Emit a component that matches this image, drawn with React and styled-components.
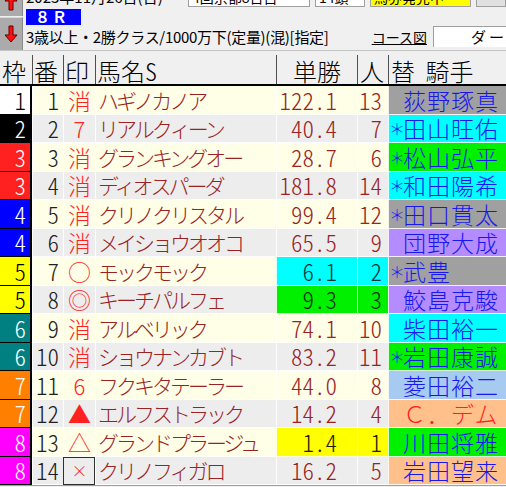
import React from "react";
import styled, { createGlobalStyle } from "styled-components";

const GlobalStyle = createGlobalStyle`
  *, *::before, *::after { box-sizing: border-box; }
  html, body { margin: 0; padding: 0; background: #f0f0f0; overflow: hidden; }
  body { font-family: "Noto Sans CJK JP", "Noto Sans", sans-serif; color: #000; }
`;

const WAKU = {
  1: { bg: "#ffffff", fg: "#000000" },
  2: { bg: "#000000", fg: "#ffffff" },
  3: { bg: "#ff2020", fg: "#ffffff" },
  4: { bg: "#0000ff", fg: "#ffffff" },
  5: { bg: "#ffff00", fg: "#000000" },
  6: { bg: "#008080", fg: "#ffffff" },
  7: { bg: "#ff8000", fg: "#ffffff" },
  8: { bg: "#ff00ff", fg: "#ffffff" },
};

const horses = [
  { waku: 1, num: 1, mark: "消", name: "ハギノカノア", odds: "122.1", pop: 13, star: false, jockey: "荻野琢真", jbg: "#a0a0a0" },
  { waku: 2, num: 2, mark: "7", name: "リアルクィーン", odds: "40.4", pop: 7, star: true, jockey: "田山旺佑", jbg: "#00ffff" },
  { waku: 3, num: 3, mark: "消", name: "グランキングオー", odds: "28.7", pop: 6, star: true, jockey: "松山弘平", jbg: "#00f000" },
  { waku: 3, num: 4, mark: "消", name: "ディオスパーダ", odds: "181.8", pop: 14, star: true, jockey: "和田陽希", jbg: "#00ffff" },
  { waku: 4, num: 5, mark: "消", name: "クリノクリスタル", odds: "99.4", pop: 12, star: true, jockey: "田口貫太", jbg: "#a0a0a0" },
  { waku: 4, num: 6, mark: "消", name: "メイショウオオコ", odds: "65.5", pop: 9, star: false, jockey: "団野大成", jbg: "#b48cff" },
  { waku: 5, num: 7, mark: "○", name: "モックモック", odds: "6.1", pop: 2, star: true, jockey: "武豊", jbg: "#a0a0a0", hot: "#00ffff", hotFg: "#003838" },
  { waku: 5, num: 8, mark: "◎", name: "キーチパルフェ", odds: "9.3", pop: 3, star: false, jockey: "鮫島克駿", jbg: "#b48cff", hot: "#00f000", hotFg: "#003000" },
  { waku: 6, num: 9, mark: "消", name: "アルベリック", odds: "74.1", pop: 10, star: false, jockey: "柴田裕一", jbg: "#00ffff" },
  { waku: 6, num: 10, mark: "消", name: "ショウナンカブト", odds: "83.2", pop: 11, star: true, jockey: "岩田康誠", jbg: "#00f000" },
  { waku: 7, num: 11, mark: "6", name: "フクキタテーラー", odds: "44.0", pop: 8, star: false, jockey: "菱田裕二", jbg: "#a6caf0" },
  { waku: 7, num: 12, mark: "▲", name: "エルフストラック", odds: "14.2", pop: 4, star: false, jockey: "Ｃ．デム", jbg: "#ffc08c", jfg: "#ff2020" },
  { waku: 8, num: 13, mark: "△", name: "グランドプラージュ", odds: "1.4", pop: 1, star: false, jockey: "川田将雅", jbg: "#00f000", hot: "#ffff00", hotFg: "#202000" },
  { waku: 8, num: 14, mark: "×", name: "クリノフィガロ", odds: "16.2", pop: 5, star: false, jockey: "岩田望来", jbg: "#ffc08c", focus: true },
];

const COLS = "32px 31px 32px 181px 81px 31px 118px";

const Window = styled.div`
  width: 506px;
  height: 487px;
  overflow: hidden;
  background: #f0f0f0;
`;

const TopPanel = styled.div`
  display: flex;
  margin-top: -16px;
  height: 67px;
  border-bottom: 1px solid #c4c4c4;
`;

const ArrowCol = styled.div`
  width: 30px;
  display: flex;
  flex-direction: column;
  gap: 1px;
`;

const ArrowButton = styled.div`
  height: ${(p) => p.$h}px;
  display: flex;
  align-items: ${(p) => (p.$up ? "flex-end" : "center")};
  justify-content: center;
  padding-bottom: ${(p) => (p.$up ? "5px" : "0")};
  background: #ababab;
  border-top: 1px solid #d8d8d8;
  border-right: 1px solid #8a8a8a;
`;

const InfoCol = styled.div`
  flex: 1;
  display: flex;
  flex-direction: column;
  padding-left: 3px;
`;

const DateRow = styled.div`
  height: 24px;
  display: flex;
  align-items: flex-end;
  gap: 5px;
  font-size: 15px;
  line-height: 20px;
  padding-bottom: 1px;
`;

const DateText = styled.div`
  width: 157px;
  white-space: nowrap;
`;

const Field = styled.div`
  width: ${(p) => p.$w}px;
  height: 20px;
  background: ${(p) => p.$bg};
  border: 1px solid #a0a0a0;
  white-space: nowrap;
  overflow: hidden;
  padding-left: 3px;
  font-size: 14px;
  line-height: 18px;
`;

const BadgeRow = styled.div`
  height: 17px;
  display: flex;
  align-items: flex-end;
`;

const RaceBadge = styled.div`
  width: 55px;
  height: 16px;
  background: #0000ff;
  color: #ffffff;
  font-size: 15px;
  line-height: 16px;
  padding-left: 9px;
  letter-spacing: 2px;
  font-weight: bold;
`;

const RaceRow = styled.div`
  flex: 1;
  display: flex;
  align-items: center;
  font-size: 15px;
  line-height: 20px;
  padding-bottom: 2px;
`;

const Conditions = styled.div`
  flex: 1;
  white-space: nowrap;
  letter-spacing: -0.3px;
`;

const CourseLink = styled.div`
  text-decoration: underline;
  font-size: 14px;
  margin-right: 6px;
  padding-left: 6px;
`;

const CourseBox = styled.div`
  width: 73px;
  height: 21px;
  background: #ffffff;
  border-top: 1px solid #a0a0a0;
  border-left: 1px solid #a0a0a0;
  font-size: 15px;
  line-height: 19px;
  padding-left: 37px;
  white-space: nowrap;
  overflow: hidden;
  letter-spacing: 3px;
`;

const Table = styled.div`
  display: flex;
  flex-direction: column;
  font-weight: 300;
`;

const HeaderRow = styled.div`
  display: grid;
  grid-template-columns: ${COLS};
  height: 35px;
  border-bottom: 2px solid #000;
  font-size: 24px;
  line-height: 26px;
`;

const HeadCell = styled.div`
  display: flex;
  align-items: center;
  padding: 2px 0 0 ${(p) => p.$pl || 0}px;
  margin-top: 4px;
  border-left: ${(p) => (p.$first ? "none" : "1px solid #505050")};
  white-space: nowrap;
`;

const Row = styled.div`
  display: grid;
  grid-template-columns: ${COLS};
  height: 28.5px;
  background: ${(p) => (p.$odd ? "#fffee6" : "#ededed")};
  font-size: 23px;
  line-height: 26px;
`;

const Cell = styled.div`
  display: flex;
  align-items: center;
  justify-content: ${(p) => p.$align || "flex-start"};
  padding: 0 ${(p) => p.$pr || 0}px 0 ${(p) => p.$pl || 0}px;
  border-left: 1px solid rgba(255, 255, 255, 0.85);
  border-bottom: 1px solid rgba(255, 255, 255, 0.85);
  background: ${(p) => p.$bg || "transparent"};
  color: ${(p) => p.$fg || "#992222"};
  white-space: nowrap;
  overflow: hidden;
`;

const WakuCell = styled.div`
  display: flex;
  align-items: center;
  justify-content: flex-end;
  padding-right: 4px;
  background: ${(p) => WAKU[p.$waku].bg};
  color: ${(p) => WAKU[p.$waku].fg};
  border-right: 2px solid #000;
  border-bottom: 1px solid #000;
  font-feature-settings: "hwid";
`;

const Num = styled.span`
  font-feature-settings: "hwid";
`;

const MarkCell = styled.div`
  display: flex;
  align-items: center;
  justify-content: center;
  color: #ff2020;
  border-left: 1px solid rgba(255, 255, 255, 0.85);
  border-bottom: 1px solid rgba(255, 255, 255, 0.85);
  outline: ${(p) => (p.$focus ? "1px solid #303030" : "none")};
  outline-offset: -1px;
  font-size: ${(p) => p.$size || 23}px;
`;

const HorseName = styled.span`
  font-size: 21px;
  letter-spacing: -3px;
`;

const JockeyCell = styled.div`
  display: flex;
  align-items: center;
  background: ${(p) => p.$bg};
  color: ${(p) => p.$fg || "#1818ee"};
  border-left: 1px solid rgba(255, 255, 255, 0.85);
  border-bottom: 1px solid rgba(255, 255, 255, 0.85);
  padding-left: 2px;
  font-size: 23px;
  letter-spacing: 1px;
  white-space: nowrap;
  overflow: hidden;
`;

const Star = styled.span`
  width: 12px;
  flex: none;
  display: flex;
  justify-content: center;
  font-size: 16px;
  letter-spacing: 0;
`;

const BottomLine = styled.div`
  border-top: 1px solid #a0a0a0;
  height: 2px;
`;

const Arrow = ({ up }) => (
  <svg width="14" height="18" viewBox="0 0 14 18">
    <path
      d={up ? "M7 1 L13 8 L9 8 L9 17 L5 17 L5 8 L1 8 Z" : "M7 17 L13 10 L9 10 L9 1 L5 1 L5 10 L1 10 Z"}
      fill="#ff1010"
      stroke="#600000"
      strokeWidth="1"
    />
  </svg>
);

const markSize = (m) => {
  if (m === "×") return 16;
  if (m === "7" || m === "6") return 22;
  return 23;
};

const App = () => {
  return (
    <Window>
      <GlobalStyle />
      <TopPanel>
        <ArrowCol>
          <ArrowButton $h={32} $up>
            <Arrow up />
          </ArrowButton>
          <ArrowButton $h={33}>
            <Arrow />
          </ArrowButton>
        </ArrowCol>
        <InfoCol>
          <DateRow>
            <DateText>2023年11月26日(日)</DateText>
            <Field $w={122} $bg="#ffffff">4回京都8日目</Field>
            <Field $w={50} $bg="#ffffff">14頭</Field>
            <Field $w={101} $bg="#ffff00">馬券発売中</Field>
            <Field $w={30} $bg="#e0e0e0" />
          </DateRow>
          <BadgeRow>
            <RaceBadge>８Ｒ</RaceBadge>
          </BadgeRow>
          <RaceRow>
            <Conditions>3歳以上・2勝クラス/1000万下(定量)(混)[指定]</Conditions>
            <CourseLink>コース図</CourseLink>
            <CourseBox>ダート</CourseBox>
          </RaceRow>
        </InfoCol>
      </TopPanel>

      <Table>
        <HeaderRow>
          <HeadCell $first $pl={2}>枠</HeadCell>
          <HeadCell $pl={1}>番</HeadCell>
          <HeadCell $pl={1}>印</HeadCell>
          <HeadCell $pl={1}>
            馬名<Num>S</Num>
          </HeadCell>
          <HeadCell $pl={16}>単勝</HeadCell>
          <HeadCell $pl={2}>人</HeadCell>
          <HeadCell $pl={2}>替&nbsp;&nbsp;騎手</HeadCell>
        </HeaderRow>

        {horses.map((h, i) => (
          <Row key={h.num} $odd={i % 2 === 0}>
            <WakuCell $waku={h.waku}>{h.waku}</WakuCell>
            <Cell $align="flex-end" $pr={4} $fg="#202020">
              <Num>{h.num}</Num>
            </Cell>
            <MarkCell $focus={h.focus} $size={markSize(h.mark)}>
              {h.mark}
            </MarkCell>
            <Cell $pl={2}>
              <HorseName>{h.name}</HorseName>
            </Cell>
            <Cell $align="flex-end" $pr={20} $bg={h.hot} $fg={h.hotFg}>
              <Num>{h.odds}</Num>
            </Cell>
            <Cell $align="flex-end" $pr={6} $bg={h.hot} $fg={h.hotFg}>
              <Num>{h.pop}</Num>
            </Cell>
            <JockeyCell $bg={h.jbg} $fg={h.jfg}>
              <Star>{h.star ? "＊" : ""}</Star>
              {h.jockey}
            </JockeyCell>
          </Row>
        ))}
        <BottomLine />
      </Table>
    </Window>
  );
};

export default App;
